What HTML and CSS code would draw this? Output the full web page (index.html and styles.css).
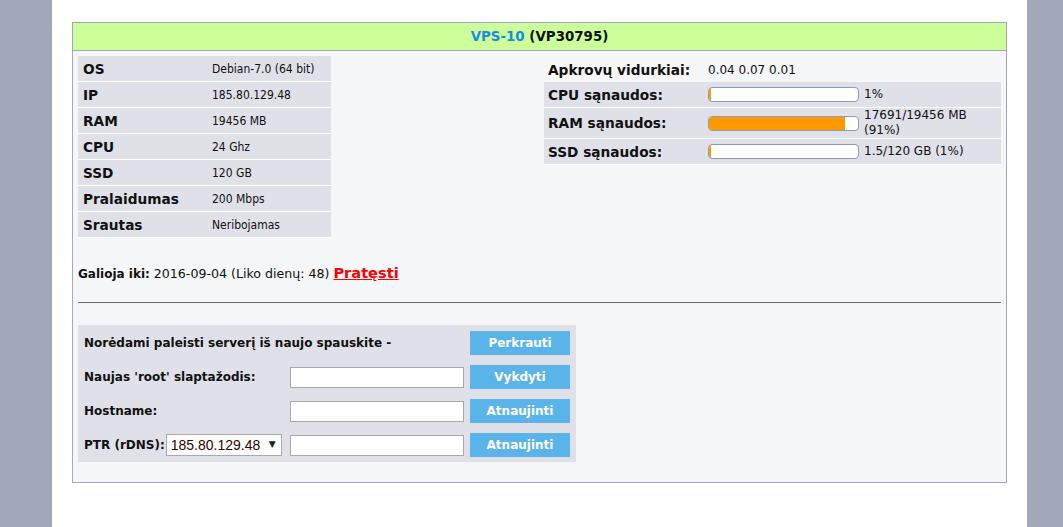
FILE: index.html
```html
<!DOCTYPE html>
<html lang="lt">
<head>
  <meta charset="UTF-8">
  <meta name="viewport" content="width=device-width, initial-scale=1.0">
  <title>VPS-10</title>
  <link rel="stylesheet" href="styles.css">
</head>
<body>
  <div class="page">
    <div class="panel">
      <div class="panel-head">
        <a href="#" class="vps-name">VPS-10</a> (VP30795)
      </div>

      <div class="panel-body">
        <div class="info">
          <!-- Server specs -->
          <table class="specs">
            <tr><th>OS</th><td>Debian-7.0 (64 bit)</td></tr>
            <tr><th>IP</th><td>185.80.129.48</td></tr>
            <tr><th>RAM</th><td>19456 MB</td></tr>
            <tr><th>CPU</th><td>24 Ghz</td></tr>
            <tr><th>SSD</th><td>120 GB</td></tr>
            <tr><th>Pralaidumas</th><td>200 Mbps</td></tr>
            <tr><th>Srautas</th><td>Neribojamas</td></tr>
          </table>

          <!-- Usage -->
          <table class="usage">
            <tr class="plain"><th>Apkrovų vidurkiai:</th><td>0.04 0.07 0.01</td></tr>
            <tr>
              <th>CPU sąnaudos:</th>
              <td><div class="meter"><div class="bar"><div class="fill" style="width: 1%"></div></div><span class="val">1%</span></div></td>
            </tr>
            <tr>
              <th>RAM sąnaudos:</th>
              <td><div class="meter"><div class="bar"><div class="fill" style="width: 91%"></div></div><span class="val">17691/19456 MB (91%)</span></div></td>
            </tr>
            <tr>
              <th>SSD sąnaudos:</th>
              <td><div class="meter"><div class="bar"><div class="fill" style="width: 1%"></div></div><span class="val">1.5/120 GB (1%)</span></div></td>
            </tr>
          </table>
        </div>

        <p class="valid">
          <b>Galioja iki:</b> 2016-09-04 (Liko dienų: 48) <a href="#" class="renew">Pratęsti</a>
        </p>

        <hr>

        <!-- Server actions -->
        <form class="actions">
          <label class="wide">Norėdami paleisti serverį iš naujo spauskite -</label>
          <button type="button">Perkrauti</button>

          <label>Naujas 'root' slaptažodis:</label>
          <input type="text">
          <button type="button">Vykdyti</button>

          <label>Hostname:</label>
          <input type="text">
          <button type="button">Atnaujinti</button>

          <label class="ptr">PTR (rDNS):<span class="select-wrap"><select><option>185.80.129.48</option></select></span></label>
          <input type="text">
          <button type="button">Atnaujinti</button>
        </form>
      </div>
    </div>
  </div>
</body>
</html>
```

FILE: styles.css
```css
body {
  margin: 0;
  background-color: #a3a7bc;
  font-family: "DejaVu Sans", Verdana, sans-serif;
  color: #111;
}
.page {
  width: 975px;
  min-height: 527px;
  margin-left: 52px;
  background-color: #fff;
  padding-top: 22px;
  box-sizing: border-box;
}
.panel {
  width: 935px;
  margin-left: 20px;
  border: 1px solid #a3a7c6;
  background-color: #f5f6f8;
  box-sizing: border-box;
}
.panel-head {
  height: 27px;
  line-height: 28px;
  background-color: #ccff99;
  border-bottom: 1px solid #a3a7c6;
  text-align: center;
  font-weight: bold;
  font-size: 13.4px;
}
.vps-name {
  color: #1a8ce6;
  text-decoration: none;
}
.panel-body {
  padding: 5px 5px 20px;
}
.info {
  display: flex;
  justify-content: space-between;
  align-items: flex-start;
}
table {
  border-collapse: collapse;
}
.specs {
  width: 253px;
}
.specs th,
.specs td,
.usage th,
.usage td {
  background-color: #e0e0e8;
  border-bottom: 1px solid #fff;
  text-align: left;
  padding: 0 5px;
  height: 25px;
}
.specs th {
  font-size: 13.7px;
  width: 119px;
}
.specs td {
  font-family: "DejaVu Sans Condensed", "DejaVu Sans", sans-serif;
  font-size: 12px;
}
.usage {
  width: 457px;
  margin-top: 1px;
}
.usage th {
  font-size: 13.7px;
  width: 151px;
  padding-left: 4px;
}
.usage td {
  font-size: 12px;
  padding: 0 0 0 4px;
}
.usage .plain th,
.usage .plain td {
  background-color: transparent;
  border-bottom: none;
  height: 25px;
}
.meter {
  display: flex;
  align-items: center;
  gap: 5px;
}
.bar {
  flex: none;
  width: 149px;
  height: 13px;
  border: 1px solid #8a9cb6;
  border-radius: 4px;
  background-color: #fff;
  overflow: hidden;
}
.fill {
  min-width: 2px;
  height: 100%;
  background-color: #ff9900;
}
.val {
  line-height: 15px;
}
.valid {
  margin: 26px 0 0;
  font-size: 12.6px;
}
.valid b {
  font-size: 12px;
}
.renew {
  color: #ff0000;
  font-weight: bold;
  font-size: 14.6px;
}
hr {
  border: none;
  border-top: 1px solid #6d6d72;
  margin: 21px 0 22px;
}
.actions {
  display: grid;
  grid-template-columns: 200px 174px 100px;
  column-gap: 6px;
  row-gap: 10px;
  align-items: center;
  width: 498px;
  padding: 6px 6px 5px;
  box-sizing: border-box;
  background-color: #e0e0e8;
}
.actions label {
  font-weight: bold;
  font-size: 12px;
  white-space: nowrap;
}
.actions .wide {
  grid-column: 1 / 3;
}
.actions .ptr {
  display: flex;
  align-items: center;
}
.actions input[type="text"] {
  height: 21px;
  border: 1px solid #aaa;
  background-color: #fff;
  box-sizing: border-box;
  margin: 0;
}
.select-wrap {
  position: relative;
  margin-left: 1px;
}
.select-wrap::after {
  content: "\25BC";
  position: absolute;
  right: 6px;
  top: 5px;
  font-size: 9px;
  color: #222;
  pointer-events: none;
}
.actions select {
  appearance: none;
  width: 116px;
  height: 22px;
  padding: 0 0 0 4px;
  font-family: "Liberation Sans", Arial, sans-serif;
  font-size: 14px;
  font-weight: normal;
  color: #300;
  border: 1px solid #aaa;
  border-radius: 0;
  background-color: #fff;
}
.actions button {
  height: 24px;
  border: none;
  background-color: #5ab4ea;
  color: #fff;
  font-weight: bold;
  font-size: 12px;
  font-family: "DejaVu Sans", sans-serif;
  cursor: pointer;
}
```
